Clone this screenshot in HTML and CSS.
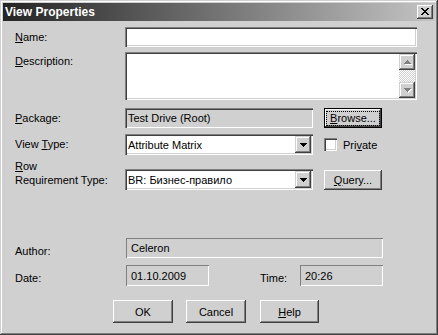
FILE: index.html
```html
<!DOCTYPE html>
<html>
<head>
<meta charset="utf-8">
<title>View Properties</title>
<link rel="stylesheet" href="styles.css">
</head>
<body>
<div class="window">
  <div class="titlebar">
    <span class="title">View Properties</span>
    <span class="close"><svg width="8" height="7" viewBox="0 0 8 7" shape-rendering="crispEdges"><path d="M0 0h2v1h-2zM6 0h2v1h-2zM1 1h2v1h-2zM5 1h2v1h-2zM2 2h4v1h-4zM3 3h2v1h-2zM2 4h4v1h-4zM1 5h2v1h-2zM5 5h2v1h-2zM0 6h2v1h-2zM6 6h2v1h-2z" fill="#000"/></svg></span>
  </div>
  <div class="content">
    <div class="row row-name">
      <label class="label"><u>N</u>ame:</label>
      <div class="field sunken name-field"></div>
    </div>
    <div class="row row-desc">
      <label class="label label-desc"><u>D</u>escription:</label>
      <div class="field sunken desc-field">
        <div class="desc-text"></div>
        <div class="scrollbar">
          <span class="sbtn"><svg width="7" height="4" viewBox="0 0 7 4" shape-rendering="crispEdges"><path d="M3 0h1v1h-1zM2 1h3v1h-3zM1 2h5v1h-5zM0 3h7v1h-7z" fill="#808080"/></svg></span>
          <span class="track"></span>
          <span class="sbtn"><svg width="7" height="4" viewBox="0 0 7 4" shape-rendering="crispEdges"><path d="M0 0h7v1h-7zM1 1h5v1h-5zM2 2h3v1h-3zM3 3h1v1h-1z" fill="#808080"/></svg></span>
        </div>
      </div>
    </div>
    <div class="row row-package">
      <label class="label"><u>P</u>ackage:</label>
      <div class="field sunken disabled pkg-field">Test Drive (Root)</div>
      <button class="btn default side-btn"><span class="focus"><u>B</u>rowse...</span></button>
    </div>
    <div class="row row-view">
      <label class="label">View <u>T</u>ype:</label>
      <div class="field sunken combo">
        <span class="combo-text">Attribute Matrix</span>
        <span class="drop"><svg width="7" height="4" viewBox="0 0 7 4" shape-rendering="crispEdges"><path d="M0 0h7v1h-7zM1 1h5v1h-5zM2 2h3v1h-3zM3 3h1v1h-1z" fill="#000"/></svg></span>
      </div>
      <span class="check sunken"></span>
      <span class="check-label">Pri<u>v</u>ate</span>
    </div>
    <div class="row row-req">
      <label class="label label-req"><u>R</u>ow<br>Requirement Type:</label>
      <div class="field sunken combo combo-req">
        <span class="combo-text">BR: Бизнес-правило</span>
        <span class="drop"><svg width="7" height="4" viewBox="0 0 7 4" shape-rendering="crispEdges"><path d="M0 0h7v1h-7zM1 1h5v1h-5zM2 2h3v1h-3zM3 3h1v1h-1z" fill="#000"/></svg></span>
      </div>
      <button class="btn side-btn query-btn"><u>Q</u>uery...</button>
    </div>
    <div class="row row-author">
      <label class="label label-low">Author:</label>
      <div class="static author-field">Celeron</div>
    </div>
    <div class="row row-date">
      <label class="label label-low">Date:</label>
      <div class="static date-field">01.10.2009</div>
      <label class="label-low time-label">Time:</label>
      <div class="static date-field">20:26</div>
    </div>
    <div class="row row-buttons">
      <button class="btn dlg-btn">OK</button>
      <button class="btn dlg-btn">Cancel</button>
      <button class="btn dlg-btn help-btn"><u>H</u>elp</button>
    </div>
  </div>
</div>
</body>
</html>
```
FILE: styles.css
```css
* {
  box-sizing: border-box;
  margin: 0;
  padding: 0;
}

html, body {
  width: 438px;
  height: 335px;
  overflow: hidden;
}

body {
  font-family: "Liberation Sans", Arial, sans-serif;
  font-size: 11px;
  color: #000;
  background: #d0d0d0;
}

u {
  text-decoration: underline;
  text-underline-offset: 1px;
}

.window {
  width: 438px;
  height: 335px;
  background: #d0d0d0;
  padding: 3px;
  display: flex;
  flex-direction: column;
  box-shadow: inset -1px -1px #404040, inset 1px 1px #d0d0d0, inset -2px -2px #808080, inset 2px 2px #ffffff;
}

.titlebar {
  height: 18px;
  flex: none;
  display: flex;
  align-items: center;
  justify-content: space-between;
  padding: 0 2px 0 2px;
  background: linear-gradient(to right, #242424, #c4c4c4);
}

.title {
  color: #fff;
  font-weight: bold;
  font-size: 12px;
  line-height: 18px;
}

.close {
  width: 16px;
  height: 14px;
  display: flex;
  align-items: center;
  justify-content: center;
  background: #d0d0d0;
  box-shadow: inset -1px -1px #404040, inset 1px 1px #ffffff, inset -2px -2px #808080, inset 2px 2px #d0d0d0;
}

.close svg {
  display: block;
  margin-top: -1px;
  margin-left: -1px;
}

.content {
  padding-left: 12px;
  display: flex;
  flex-direction: column;
}

.row {
  display: flex;
  align-items: center;
}

.label {
  width: 110px;
  flex: none;
  line-height: 13px;
}

.sunken {
  box-shadow: inset 1px 1px #808080, inset 2px 2px #404040, inset -1px -1px #ffffff, inset -2px -2px #d0d0d0;
}

.field {
  background: #fff;
  flex: none;
}

.disabled {
  background: #d0d0d0;
}

.row-name {
  margin-top: 6px;
}

.name-field {
  width: 292px;
  height: 20px;
}

.row-desc {
  margin-top: 5px;
  align-items: flex-start;
}

.label-desc {
  padding-top: 3px;
}

.desc-field {
  width: 292px;
  height: 48px;
  padding: 2px;
  display: flex;
}

.desc-text {
  flex: 1;
}

.scrollbar {
  width: 16px;
  display: flex;
  flex-direction: column;
}

.sbtn {
  width: 16px;
  height: 16px;
  flex: none;
  display: flex;
  align-items: center;
  justify-content: center;
  background: #d0d0d0;
  box-shadow: inset -1px -1px #404040, inset 1px 1px #d0d0d0, inset -2px -2px #808080, inset 2px 2px #ffffff;
}

.sbtn svg {
  display: block;
  filter: drop-shadow(1px 1px 0 #ffffff);
}

.track {
  flex: 1;
  background: repeating-conic-gradient(#ffffff 0 25%, #d0d0d0 0 50%) 0 0 / 2px 2px;
}

.row-package {
  margin-top: 8px;
}

.pkg-field {
  width: 188px;
  height: 20px;
  line-height: 20px;
  padding-left: 3px;
}

.btn {
  font-family: "Liberation Sans", Arial, sans-serif;
  font-size: 11px;
  color: #000;
  border: none;
  background: #d0d0d0;
  display: flex;
  align-items: center;
  justify-content: center;
  flex: none;
  box-shadow: inset -1px -1px #404040, inset 1px 1px #ffffff, inset -2px -2px #808080, inset 2px 2px #d0d0d0;
}

.btn.default {
  box-shadow: inset 0 0 0 1px #000, inset -2px -2px #404040, inset 2px 2px #ffffff, inset -3px -3px #808080;
}

.focus {
  display: block;
  width: 52px;
  height: 13px;
  line-height: 12px;
  text-align: center;
  outline: 1px dotted #000;
}

.side-btn {
  width: 58px;
  height: 20px;
  margin-left: 11px;
}

.row-view {
  margin-top: 6px;
}

.combo {
  width: 188px;
  height: 21px;
  padding: 2px;
  display: flex;
  align-items: center;
}

.combo-text {
  flex: 1;
  padding-left: 1px;
}

.drop {
  width: 16px;
  height: 17px;
  display: flex;
  align-items: center;
  justify-content: center;
  background: #d0d0d0;
  box-shadow: inset -1px -1px #404040, inset 1px 1px #d0d0d0, inset -2px -2px #808080, inset 2px 2px #ffffff;
}

.drop svg {
  display: block;
}

.check {
  width: 13px;
  height: 13px;
  background: #fff;
  margin-left: 11px;
  flex: none;
}

.check-label {
  margin-left: 6px;
}

.row-req {
  margin-top: 4px;
  align-items: flex-start;
}

.label-req {
  line-height: 14px;
}

.combo-req {
  margin-top: 10px;
}

.query-btn {
  margin-top: 11px;
}

.static {
  flex: none;
  height: 20px;
  display: flex;
  align-items: center;
  padding-left: 5px;
  box-shadow: inset 1px 1px #808080, inset -1px -1px #ffffff;
}

.row-author {
  margin-top: 48px;
  align-items: flex-start;
}

.label-low {
  padding-top: 7px;
}

.author-field {
  width: 257px;
  margin-left: 1px;
}

.row-date {
  margin-top: 7px;
  align-items: flex-start;
}

.date-field {
  width: 83px;
  height: 21px;
}

.row-date .date-field:nth-of-type(1) {
  margin-left: 1px;
}

.time-label {
  width: 40px;
  margin-left: 51px;
  line-height: 13px;
}

.row-buttons {
  margin-top: 14px;
  padding-left: 98px;
  gap: 13px;
}

.dlg-btn {
  width: 60px;
  height: 23px;
}

.help-btn {
  width: 59px;
  margin-left: 1px;
}
```
